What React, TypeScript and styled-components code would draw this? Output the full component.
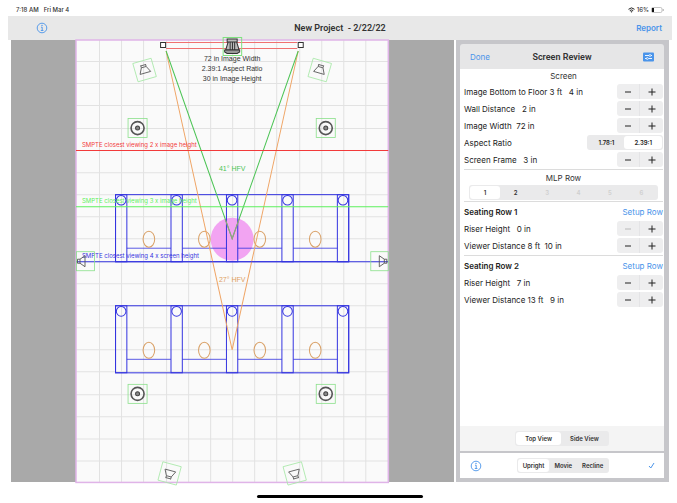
import React, { useState } from "react";
import styled, { createGlobalStyle } from "styled-components";

const blue = "#4a94ea";

const GlobalStyle = createGlobalStyle`
  * { box-sizing: border-box; }
  body { margin: 0; background: #fff; color: #333; font: 8px/12px Inter, "Liberation Sans", sans-serif; }
  button { font: inherit; color: inherit; border: 0; padding: 0; background: none; cursor: pointer; }
`;

const Device = styled.div`
  min-height: 100vh;
  display: flex;
  flex-direction: column;
  padding: 0 5px 0 8px;
`;

const StatusBar = styled.header`
  height: 16px;
  display: flex;
  justify-content: space-between;
  align-items: center;
  padding: 4px 8px 0;
  font-size: 6px;
  font-weight: 500;
`;

const StatusGroup = styled.div`
  display: flex;
  align-items: center;
  gap: ${(p: { $gap: number }) => p.$gap}px;
`;

const Toolbar = styled.nav`
  height: 24px;
  display: grid;
  grid-template-columns: 1fr auto 1fr;
  align-items: center;
  padding: 0 10px 0 28px;
  background: #e8e8e8;
`;

const ProjectTitle = styled.h1`
  margin: 0 18px 0 0;
  font-family: Roboto, "Liberation Sans", sans-serif;
  font-size: 9px;
  font-weight: 600;
  white-space: pre;
`;

const LinkButton = styled.button<{ $strong?: boolean }>`
  color: ${blue};
  font-weight: ${(p) => (p.$strong ? 600 : 400)};
  justify-self: end;
`;

const IconButton = styled.button`
  display: flex;
  color: ${blue};
  justify-self: start;
`;

const Workspace = styled.main`
  flex: 1;
  display: flex;
  gap: 2px;
  padding: 0 3px;
`;

const Stage = styled.section`
  flex: 1;
  display: flex;
  justify-content: center;
  align-items: flex-start;
  background: #a9a9a9;
`;

const Plan = styled.svg`
  display: block;
  width: 70.5%;
  overflow: visible;
  background: #fafafa;
  font-family: "Liberation Sans", Arial, sans-serif;
`;

const Panel = styled.aside`
  width: 213px;
  display: flex;
  flex-direction: column;
  padding: 4px 5px 4px 4px;
  background: #c6c6ca;
`;

const PanelHeader = styled.header`
  height: 25px;
  display: grid;
  grid-template-columns: 1fr auto 1fr;
  align-items: center;
  padding: 0 10px;
  background: #e6e6e7;
  border-radius: 3px 3px 0 0;
`;

const PanelTitle = styled.h2`
  margin: 0;
  font-family: Roboto, "Liberation Sans", sans-serif;
  font-size: 9px;
  font-weight: 600;
`;

const PanelBody = styled.div`
  flex: 1;
  padding: 0 1px 0 4px;
  background: #fff;
`;

const Section = styled.section`
  padding: 1px 0;
  border-bottom: 1px solid #dcdcdc;
  &:first-child { padding-top: 0; }
  &:last-child { border-bottom: 0; }
`;

const Caption = styled.h3`
  margin: 0;
  font-size: 8px;
  font-weight: 400;
  line-height: 14px;
  text-align: center;
`;

const Row = styled.div<{ $strong?: boolean }>`
  height: 17px;
  display: flex;
  align-items: center;
  justify-content: space-between;
  white-space: pre;
  color: #222;
  font-weight: ${(p) => (p.$strong ? 600 : 400)};
`;

const StepperBox = styled.div`
  width: 46px;
  height: 15px;
  display: grid;
  grid-template-columns: 1fr 1fr;
  border-radius: 3px;
  background: #eeeeef;
`;

const StepButton = styled.button`
  display: grid;
  place-items: center;
  &:first-child { border-right: 1px solid #e4e4e6; }
  &:disabled { color: #b8b8b8; }
`;

const Segments = styled.div<{ $wide?: boolean }>`
  height: 15px;
  display: flex;
  padding: 1px;
  margin: ${(p) => (p.$wide ? "0 5px" : "0")};
  border-radius: 3px;
  background: #eaeaeb;
  font-size: 6px;
`;

const Segment = styled.button<{ $pad: number }>`
  flex: 1 0 auto;
  padding: 0 ${(p) => p.$pad}px;
  line-height: 13px;
  font-weight: 600;
  border-radius: 3px;
  &[aria-pressed="true"] { background: #fff; }
  &:disabled { color: #cfcfcf; }
`;

const ViewBar = styled.div`
  height: 27px;
  display: flex;
  justify-content: center;
  align-items: center;
  background: #f4f4f4;
  border-bottom: 2px solid #c6c6ca;
`;

const PostureBar = styled.footer`
  height: 25px;
  display: grid;
  grid-template-columns: 1fr auto 1fr;
  align-items: center;
  padding: 0 8px 0 10px;
  background: #fff;
`;

const CheckButton = styled(IconButton)`
  justify-self: end;
`;

const HomeArea = styled.footer`
  height: 21px;
  display: flex;
  justify-content: center;
  align-items: center;
  padding-top: 8px;
`;

const HomeBar = styled.div`
  width: 25%;
  height: 3px;
  border-radius: 2px;
  background: #000;
`;

const InfoIcon = () => (
  <svg width="12" height="12" viewBox="0 0 12 12" fill="none" stroke="currentColor">
    <circle cx="6" cy="6" r="4.8" strokeWidth="0.9" />
    <path d="M5 5.2h1.2v3.2M4.8 8.5h2.6" strokeWidth="0.9" />
    <circle cx="6" cy="3.4" r="0.7" fill="currentColor" stroke="none" />
  </svg>
);

const Stepper = ({ label, atMin }: { label: string; atMin?: boolean }) => (
  <StepperBox role="group" aria-label={label}>
    <StepButton aria-label="Decrease" disabled={atMin}>
      <svg width="8" height="8" viewBox="0 0 8 8" stroke="currentColor"><path d="M1 4h6" /></svg>
    </StepButton>
    <StepButton aria-label="Increase">
      <svg width="8" height="8" viewBox="0 0 8 8" stroke="currentColor"><path d="M0.5 4h7M4 0.5v7" /></svg>
    </StepButton>
  </StepperBox>
);

type ChoiceProps = { label: string; items: string[]; initial: number; pad: number; enabled?: number; wide?: boolean };

const Choice = ({ label, items, initial, pad, enabled = items.length, wide }: ChoiceProps) => {
  const [selected, setSelected] = useState(initial);
  return (
    <Segments role="group" aria-label={label} $wide={wide}>
      {items.map((item, i) => (
        <Segment key={item} $pad={pad} aria-pressed={i === selected} disabled={i >= enabled} onClick={() => setSelected(i)}>
          {item}
        </Segment>
      ))}
    </Segments>
  );
};

const Measure = ({ label, value, atMin }: { label: string; value: string; atMin?: boolean }) => (
  <Row>
    <span>{label + value}</span>
    <Stepper label={label} atMin={atMin} />
  </Row>
);

const CornerSpeaker = ({ x, y, angle }: { x: number; y: number; angle: number }) => (
  <g transform={`translate(${x} ${y}) rotate(${angle})`} fill="none">
    <rect x="-9.5" y="-9.5" width="19" height="19" stroke="#a9e8a9" strokeWidth="0.8" />
    <path d="M-2.5 -3L-5.5 3H5.5L2.5 -3ZM-2.5 -3V-5.5M2.5 -3V-5.5M-2.5 -5H2.5" stroke="#666" strokeWidth="0.9" />
  </g>
);

const CeilingSpeaker = ({ x, y }: { x: number; y: number }) => (
  <g transform={`translate(${x} ${y})`} fill="none">
    <rect x="-9.5" y="-9.5" width="19" height="19" stroke="#8be08b" strokeWidth="0.8" />
    <circle r="6.5" stroke="#555" strokeWidth="1.6" />
    <circle r="2" fill="#888" stroke="#444" />
  </g>
);

const SeatRow = ({ y }: { y: number }) => (
  <g transform={`translate(39.5 ${y})`} fill="none" stroke="#3434e0">
    <rect width="233" height="67" />
    {[0, 1, 2, 3, 4].map((i) => (
      <g key={i} transform={`translate(${i * 55.4} 0)`}>
        <path d="M0 0V67H11.3V0Z" />
        <circle cx="5.6" cy="5.6" r="4.8" />
      </g>
    ))}
    {[0, 1, 2, 3].map((i) => (
      <g key={i} transform={`translate(${i * 55.4} 0)`}>
        <path d="M11.3 53.5H55.4" strokeWidth="0.8" />
        <ellipse cx="33.3" cy="44.5" rx="5.8" ry="8" stroke="#d9a066" />
      </g>
    ))}
  </g>
);

const limits = [
  { y: 110.5, color: "#f23a3a", text: "SMPTE closest viewing 2 x image height" },
  { y: 166.5, color: "#5df05d", text: "SMPTE closest viewing 3 x image height" },
  { y: 221.5, color: "#3434e0", text: "SMPTE closest viewing 4 x screen height" },
];

const RoomPlan = () => (
  <Plan viewBox="0 0 312 442" role="img" aria-label="Top view of the room">
    <g stroke="#e2e2e2">
      {Array.from({ length: 13 }, (_, i) => <path key={i} d={`M${Math.round(23 + i * 22.17) + 0.5} 0V442`} />)}
      {Array.from({ length: 19 }, (_, i) => <path key={i} d={`M0 ${Math.round(21 + i * 22.17) + 0.5}H312`} />)}
    </g>
    <rect x="0" y="0" width="312" height="442" fill="none" stroke="#e0b4e8" strokeWidth="1.5" />
    <circle cx="156" cy="199" r="21.5" fill="#f2a4f2" />
    <SeatRow y={154.5} />
    <SeatRow y={265.5} />
    <g fill="none">
      <path d="M90 11L156 309.5L222 11" stroke="#efa566" />
      <path d="M90 11L156 198.5L222 11" stroke="#4cc455" />
      <path d="M149 179L156 198.5L163 179" stroke="#9a9a86" />
    </g>
    <g fontFamily="Inter" fontSize="6">
      {limits.map((l) => (
        <g key={l.y}>
          <path d={`M0 ${l.y}H312`} stroke={l.color} />
          <text x="6" y={l.y - 3.5} fill={l.color}>{l.text}</text>
        </g>
      ))}
    </g>
    <g fill="none">
      <path d="M90 2.5H221M90 8.5H221" stroke="#f07070" />
      <rect x="84.5" y="2.5" width="5" height="5" fill="#fff" stroke="#333" />
      <rect x="222" y="2.5" width="5" height="5" fill="#fff" stroke="#333" />
      <rect x="147" y="-2.5" width="18.5" height="18" stroke="#7fe07f" />
      <path d="M151 -1H161V2H151ZM152 2L149.5 10H163L160.5 2ZM154 2V10M156.3 2V10M158.5 2V10" stroke="#333" fill="#bbb" />
      <path d="M148.5 10H163.5V12L161 13.5H151L148.5 12Z" stroke="#333" fill="#999" />
    </g>
    <g fontSize="7" fill="#333" textAnchor="middle">
      <text x="156" y="21">72 in Image Width</text>
      <text x="156" y="31">2.39:1 Aspect Ratio</text>
      <text x="156" y="41">30 in Image Height</text>
      <text x="156" y="131" fill="#4cc455">41° HFV</text>
      <text x="156" y="242" fill="#e0a060">27° HFV</text>
    </g>
    <CornerSpeaker x={68.5} y={30} angle={-16} />
    <CornerSpeaker x={243.5} y={30} angle={16} />
    <CornerSpeaker x={93.5} y={433} angle={195} />
    <CornerSpeaker x={218.5} y={433} angle={165} />
    <CeilingSpeaker x={61.5} y={88} />
    <CeilingSpeaker x={249.5} y={88} />
    <CeilingSpeaker x={61.5} y={353.5} />
    <CeilingSpeaker x={249.5} y={353.5} />
    <g fill="none">
      <rect x="0.5" y="211.5" width="18" height="19" stroke="#8be08b" strokeWidth="0.8" />
      <rect x="294.5" y="211.5" width="17.5" height="19" stroke="#8be08b" strokeWidth="0.8" />
      <path d="M9 215.5V226.5L4 223V219ZM4 219H1.5V223H4" stroke="#555" strokeWidth="0.9" />
      <path d="M303 215.5V226.5L308 223V219ZM308 219H310.5V223H308" stroke="#555" strokeWidth="0.9" />
    </g>
  </Plan>
);

export default function App() {
  return (
    <>
      <GlobalStyle />
      <Device>
        <StatusBar>
          <StatusGroup $gap={5}>
            <span>7:18 AM</span>
            <span>Fri Mar 4</span>
          </StatusGroup>
          <StatusGroup $gap={2}>
            <svg width="7" height="6" viewBox="0 0 7 6" fill="none" stroke="#222">
              <path d="M0.5 2.3Q3.5 -0.6 6.5 2.3M1.8 3.6Q3.5 2.2 5.2 3.6" />
              <path d="M2.8 4.4H4.2L3.5 5.4Z" fill="#222" strokeWidth="0.4" />
            </svg>
            <span>16%</span>
            <svg width="13" height="6" viewBox="0 0 13 6">
              <rect x="0.5" y="0.5" width="10.5" height="5" rx="1.5" fill="none" stroke="#aaa" strokeWidth="0.7" />
              <rect x="1" y="1" width="2" height="4" fill="#111" />
              <path d="M12.2 2v2" stroke="#aaa" />
            </svg>
          </StatusGroup>
        </StatusBar>
        <Toolbar>
          <IconButton aria-label="Information"><InfoIcon /></IconButton>
          <ProjectTitle>New Project  - 2/22/22</ProjectTitle>
          <LinkButton $strong>Report</LinkButton>
        </Toolbar>
        <Workspace>
          <Stage><RoomPlan /></Stage>
          <Panel>
            <PanelHeader>
              <IconButton>Done</IconButton>
              <PanelTitle>Screen Review</PanelTitle>
              <LinkButton aria-label="Settings">
                <svg width="11" height="10" viewBox="0 0 11 10" display="block">
                  <rect width="11" height="9" y="0.5" rx="1" fill={blue} />
                  <path d="M2 3.5h4M8 3.5h1M2 6.5h1.5M5.5 6.5H9" stroke="#fff" strokeWidth="0.9" />
                  <circle cx="7" cy="3.5" r="1" fill="none" stroke="#fff" strokeWidth="0.7" />
                  <circle cx="4.3" cy="6.5" r="1" fill="none" stroke="#fff" strokeWidth="0.7" />
                </svg>
              </LinkButton>
            </PanelHeader>
            <PanelBody>
              <Section>
                <Caption>Screen</Caption>
                <Measure label="Image Bottom to Floor" value=" 3 ft   4 in" />
                <Measure label="Wall Distance" value="   2 in" />
                <Measure label="Image Width" value="  72 in" />
                <Row>
                  <span>Aspect Ratio</span>
                  <Choice label="Aspect Ratio" items={["1.78:1", "2.39:1"]} initial={1} pad={10} />
                </Row>
                <Measure label="Screen Frame" value="   3 in" />
              </Section>
              <Section>
                <Caption>MLP Row</Caption>
                <Choice label="MLP Row" items={["1", "2", "3", "4", "5", "6"]} initial={0} pad={0} enabled={2} wide />
              </Section>
              <Section>
                <Row $strong><span>Seating Row 1</span><LinkButton>Setup Row</LinkButton></Row>
                <Measure label="Riser Height" value="   0 in" atMin />
                <Measure label="Viewer Distance" value=" 8 ft  10 in" />
              </Section>
              <Section>
                <Row $strong><span>Seating Row 2</span><LinkButton>Setup Row</LinkButton></Row>
                <Measure label="Riser Height" value="   7 in" />
                <Measure label="Viewer Distance" value=" 13 ft   9 in" />
              </Section>
            </PanelBody>
            <ViewBar>
              <Choice label="View" items={["Top View", "Side View"]} initial={0} pad={9} />
            </ViewBar>
            <PostureBar>
              <IconButton aria-label="Information"><InfoIcon /></IconButton>
              <Choice label="Posture" items={["Upright", "Movie", "Recline"]} initial={0} pad={5} />
              <CheckButton aria-label="Confirm">
                <svg width="9" height="9" viewBox="0 0 9 9" fill="none" stroke="currentColor"><path d="M2 5L3.8 7L7 2" /></svg>
              </CheckButton>
            </PostureBar>
          </Panel>
        </Workspace>
        <HomeArea><HomeBar /></HomeArea>
      </Device>
    </>
  );
}
